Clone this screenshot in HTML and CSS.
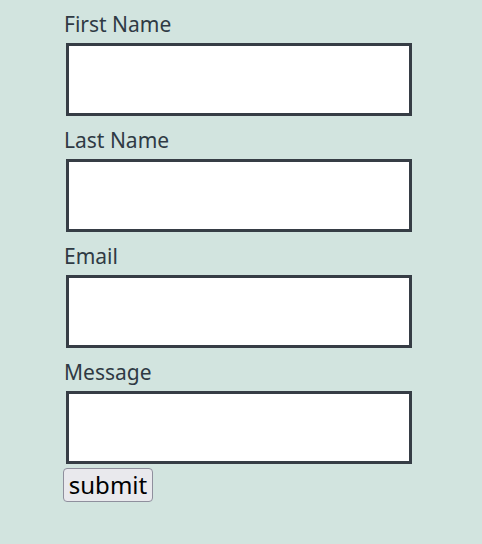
FILE: index.html
```html
<!DOCTYPE html>
<html>
<head>
<meta charset="utf-8">
<link rel="stylesheet" href="styles.css">
</head>
<body>
<form class="form">
  <label class="label" for="fn">First Name</label>
  <input class="field" id="fn" type="text">
  <label class="label" for="ln">Last Name</label>
  <input class="field" id="ln" type="text">
  <label class="label" for="em">Email</label>
  <input class="field" id="em" type="email">
  <label class="label" for="msg">Message</label>
  <textarea class="field" id="msg"></textarea>
  <button class="submit" type="submit">submit</button>
</form>
</body>
</html>
```
FILE: styles.css
```css
html, body {
  margin: 0;
  background: #d2e4df;
}
.form {
  display: flex;
  flex-direction: column;
  align-items: flex-start;
  padding: 10px 0 0 64px;
  font-family: "Noto Sans", sans-serif;
}
.label {
  display: block;
  font-size: 21px;
  line-height: 29px;
  height: 29px;
  color: #2f3a44;
}
.field {
  box-sizing: border-box;
  width: 346px;
  height: 73px;
  margin: 4px 0 10px 2px;
  border: 3px solid #363d45;
  background: #fff;
  padding: 0;
  resize: none;
}
textarea.field {
  margin-bottom: 4px;
}
.submit {
  box-sizing: border-box;
  width: 90px;
  height: 34px;
  margin-left: -1px;
  font-family: "Noto Sans", sans-serif;
  font-size: 24px;
  line-height: 32px;
  color: #000;
  background: #e9e9ed;
  border: 1px solid #8f8f9d;
  border-radius: 4px;
  padding: 0;
}
```
